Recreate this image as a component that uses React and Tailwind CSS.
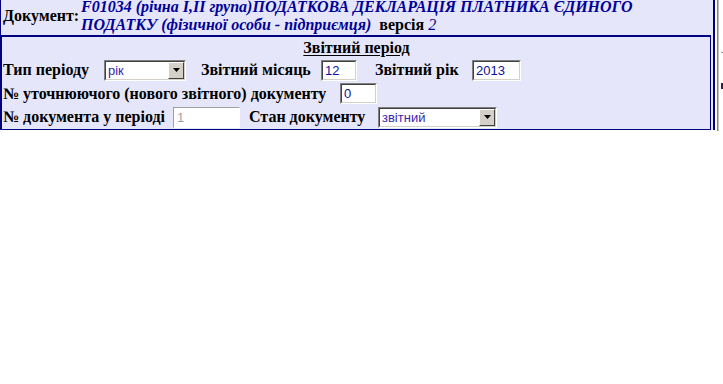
import React from 'react';

function Inset({ className, children }) {
  return (
    <div className={`flex h-[21px] border border-t-[#808080] border-l-[#808080] border-b-white border-r-white ${className}`}>
      <div className="flex flex-1 min-w-0 border border-t-[#404040] border-l-[#404040] border-b-[#d4d0c8] border-r-[#d4d0c8] bg-white">
        {children}
      </div>
    </div>
  );
}

function TextBox({ className, value }) {
  return (
    <Inset className={className}>
      <span className="pl-[2px] font-['Liberation_Sans',Arial,sans-serif] text-[13px] leading-[17px] font-normal text-[#1010a0]">{value}</span>
    </Inset>
  );
}

function DropDown({ className, value }) {
  return (
    <Inset className={className}>
      <span className="flex-1 pl-[2px] font-['Liberation_Sans',Arial,sans-serif] text-[13px] leading-[17px] font-normal text-[#3a1fb0]">{value}</span>
      <span className="flex w-[16px] items-center justify-center border border-t-white border-l-white border-b-[#404040] border-r-[#404040] bg-[#d4d0c8]">
        <svg width="7" height="4" viewBox="0 0 7 4">
          <path d="M0 0h7L3.5 4z" fill="#000" />
        </svg>
      </span>
    </Inset>
  );
}

export default function App() {
  return (
    <div className="flex h-[384px] w-[723px] items-start overflow-hidden bg-white font-['Liberation_Sans',Arial,sans-serif]">
      <div className="-mt-[4px] w-[715px] border-l border-r-2 border-[#000080] bg-[#e6e6fa] font-['Liberation_Serif','Times_New_Roman',serif] text-[16px]">
        {/* document header */}
        <div className="flex h-[39px] items-center pl-[2px]">
          <span className="w-[78px] font-bold text-black">Документ:</span>
          <div className="leading-[18px] font-bold text-[#000099] italic">
            F01034 (річна I,II група)ПОДАТКОВА ДЕКЛАРАЦІЯ ПЛАТНИКА ЄДИНОГО
            <br />
            ПОДАТКУ (фізичної особи - підприємця){'\u00a0\u00a0'}
            <span className="not-italic text-black">версія</span> <span className="font-normal">2</span>
          </div>
        </div>

        {/* reporting period */}
        <div className="mr-[2px] border border-t-2 border-[#000080] pl-[1px] font-bold text-black">
          <div className="flex h-[21px] items-center justify-center">
            <span className="underline underline-offset-2">Звітний період</span>
          </div>

          <div className="flex h-[24px] items-center whitespace-nowrap">
            <span className="w-[101px]">Тип періоду</span>
            <DropDown className="w-[82px]" value="рік" />
            <span className="ml-[15px] w-[120px]">Звітний місяць</span>
            <TextBox className="w-[36px]" value="12" />
            <span className="ml-[18px] w-[97px]">Звітний рік</span>
            <TextBox className="w-[49px]" value="2013" />
          </div>

          <div className="flex h-[23px] items-center whitespace-nowrap">
            <span className="w-[337px]">№ уточнюючого (нового звітного) документу</span>
            <TextBox className="w-[37px]" value="0" />
          </div>

          <div className="flex h-[24px] items-center whitespace-nowrap">
            <span className="w-[170px]">№ документа у періоді</span>
            <div className="flex h-[21px] w-[67px] border border-t-[#a0a0a0] border-l-[#a0a0a0] border-b-white border-r-white bg-white">
              <span className="pl-[3px] font-['Liberation_Sans',Arial,sans-serif] text-[13px] leading-[19px] font-normal text-[#a0a0a0]">1</span>
            </div>
            <span className="ml-[9px] w-[129px]">Стан документу</span>
            <DropDown className="w-[119px]" value="звітний" />
          </div>
        </div>
      </div>

      {/* edge of neighbouring frame */}
      <div className="ml-[2px] h-[131px] w-[2px] border-l border-r border-l-[#808080] border-r-[#c0c0c0]" />
      <div className="ml-[2px] flex w-[2px] flex-col">
        <div className="mt-[52px] h-px bg-[#909090]" />
        <div className="mt-[30px] h-[6px] bg-[#302050]" />
      </div>
    </div>
  );
}
